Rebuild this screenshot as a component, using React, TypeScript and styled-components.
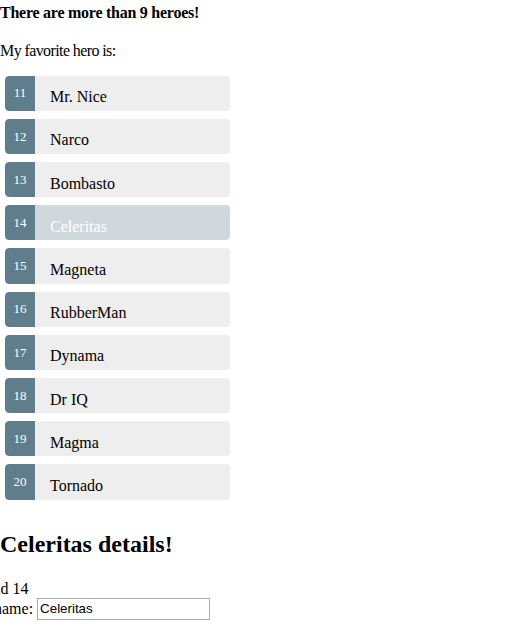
import React from "react";
import styled, { createGlobalStyle } from "styled-components";

const GlobalStyle = createGlobalStyle`
  body {
    margin: 0;
    font-family: "Liberation Serif", "Times New Roman", serif;
    font-size: 16px;
    color: #000;
    background: #fff;
  }
`;

const Page = styled.div`
  padding-top: 4px;
`;

const Notice = styled.div`
  font-weight: bold;
  letter-spacing: -0.25px;
  margin: 0 0 19.5px;
`;

const Intro = styled.div`
  margin: 0;
  letter-spacing: -0.6px;
`;

const HeroList = styled.ul`
  list-style: none;
  margin: 16.2px 0 0;
  padding: 0 0 0 5px;
  width: 225px;
  display: flex;
  flex-direction: column;
  gap: 8px;
`;

const HeroItem = styled.li<{ $selected?: boolean }>`
  display: flex;
  height: 35.2px;
  border-radius: 4px;
  overflow: hidden;
  background: ${(p) => (p.$selected ? "#CFD8DC" : "#EEE")};
  color: ${(p) => (p.$selected ? "#fff" : "#000")};
  cursor: pointer;
`;

const Badge = styled.span`
  box-sizing: border-box;
  width: 30px;
  flex: none;
  display: flex;
  justify-content: center;
  padding-top: 10.8px;
  font-size: 13px;
  line-height: 13px;
  color: #fff;
  background: #607d8b;
  border-radius: 4px 0 0 4px;
`;

const HeroName = styled.span`
  margin-left: 15px;
  padding-top: 12.6px;
`;

const DetailsTitle = styled.h2`
  font-size: 24px;
  font-weight: bold;
  margin: 31.5px 0 21.9px;
`;

const Field = styled.div<{ $shift: number }>`
  margin-left: ${(p) => p.$shift}px;
`;

const NameInput = styled.input`
  box-sizing: border-box;
  width: 173px;
  height: 22px;
  border: 1px solid #a9a9a9;
  padding: 1px 2px;
  font-family: "Liberation Sans", Arial, sans-serif;
  font-size: 13.33px;
  color: #000;
  outline: none;
`;

const heroes = [
  { id: 11, name: "Mr. Nice" },
  { id: 12, name: "Narco" },
  { id: 13, name: "Bombasto" },
  { id: 14, name: "Celeritas" },
  { id: 15, name: "Magneta" },
  { id: 16, name: "RubberMan" },
  { id: 17, name: "Dynama" },
  { id: 18, name: "Dr IQ" },
  { id: 19, name: "Magma" },
  { id: 20, name: "Tornado" },
];

export default function App() {
  const [selectedId, setSelectedId] = React.useState(14);
  const [names, setNames] = React.useState(heroes);
  const selected = names.find((h) => h.id === selectedId)!;
  return (
    <Page>
      <GlobalStyle />
      <Notice>There are more than 9 heroes!</Notice>
      <Intro>My favorite hero is:</Intro>
      <HeroList>
        {names.map((h) => (
          <HeroItem
            key={h.id}
            $selected={h.id === selectedId}
            onClick={() => setSelectedId(h.id)}
          >
            <Badge>{h.id}</Badge>
            <HeroName>{h.name}</HeroName>
          </HeroItem>
        ))}
      </HeroList>
      <DetailsTitle>{selected.name} details!</DetailsTitle>
      <Field $shift={-4}>id {selected.id}</Field>
      <Field $shift={-6}>
        name:{" "}
        <NameInput
          value={selected.name}
          onChange={(e) =>
            setNames(
              names.map((h) =>
                h.id === selectedId ? { ...h, name: e.target.value } : h
              )
            )
          }
        />
      </Field>
    </Page>
  );
}
